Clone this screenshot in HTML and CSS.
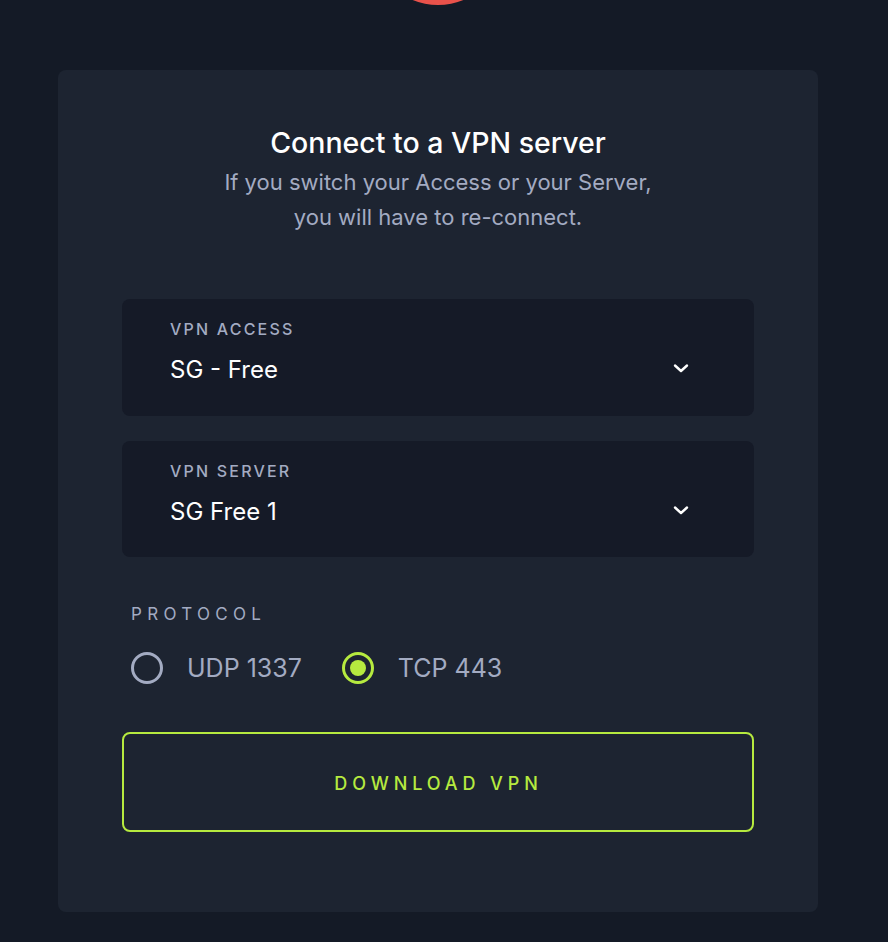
FILE: index.html
```html
<!DOCTYPE html>
<html lang="en">
<head>
<meta charset="utf-8">
<title>Connect to a VPN server</title>
<link rel="stylesheet" href="styles.css">
</head>
<body>
<div class="top">
  <div class="blob"></div>
</div>
<main class="card">
  <h1 class="title">Connect to a VPN server</h1>
  <p class="subtitle">If you switch your Access or your Server,<br>you will have to re-connect.</p>

  <div class="field">
    <div class="field-text">
      <div class="field-label">VPN ACCESS</div>
      <div class="field-value">SG - Free</div>
    </div>
    <svg class="chev" width="18" height="12" viewBox="0 0 18 12"><path d="M3 3.5 L9 9 L15 3.5" fill="none" stroke="#ffffff" stroke-width="2.4" stroke-linecap="round" stroke-linejoin="round"/></svg>
  </div>

  <div class="field">
    <div class="field-text">
      <div class="field-label">VPN SERVER</div>
      <div class="field-value">SG Free 1</div>
    </div>
    <svg class="chev" width="18" height="12" viewBox="0 0 18 12"><path d="M3 3.5 L9 9 L15 3.5" fill="none" stroke="#ffffff" stroke-width="2.4" stroke-linecap="round" stroke-linejoin="round"/></svg>
  </div>

  <div class="protocol">
    <div class="protocol-label">PROTOCOL</div>
    <div class="radios">
      <label class="radio">
        <span class="ring"></span>
        <span class="radio-text">UDP 1337</span>
      </label>
      <label class="radio checked">
        <span class="ring"><span class="dot"></span></span>
        <span class="radio-text">TCP 443</span>
      </label>
    </div>
  </div>

  <button class="download">DOWNLOAD VPN</button>
</main>
</body>
</html>
```
FILE: styles.css
```css
* { box-sizing: border-box; }
html, body { margin: 0; padding: 0; }
body {
  background: #141a26;
  font-family: Inter, "Noto Sans", "Liberation Sans", sans-serif;
  color: #ffffff;
  height: 942px;
  overflow: hidden;
}
.top {
  height: 70px;
  display: flex;
  justify-content: flex-start;
  overflow: hidden;
}
.blob {
  width: 134px;
  height: 134px;
  border-radius: 50%;
  background: #e9524b;
  margin-top: -129px;
  margin-left: 371px;
  flex: none;
}
.card {
  margin-left: 58px;
  width: 760px;
  height: 842px;
  background: #1d2431;
  border-radius: 8px;
  padding: 55px 64px 80px;
  display: flex;
  flex-direction: column;
}
.title {
  margin: 0;
  text-align: center;
  font-size: 28.5px;
  font-weight: 500;
  line-height: 36px;
  color: #ffffff;
}
.subtitle {
  margin: 4px 0 0;
  text-align: center;
  font-size: 22px;
  line-height: 35px;
  color: #a3abc2;
  font-weight: 400;
}
.field {
  background: #151a27;
  border-radius: 8px;
  height: 117px;
  padding: 20px 64px 0 48px;
  display: flex;
  align-items: flex-start;
  justify-content: space-between;
  margin-top: 25px;
}
.subtitle + .field { margin-top: 64px; }
.field-label {
  font-size: 16px;
  line-height: 20px;
  letter-spacing: 2.2px;
  color: #a3abc2;
  font-weight: 500;
}
.field-value {
  margin-top: 16px;
  font-size: 24px;
  line-height: 30px;
  color: #ffffff;
}
.chev { margin-top: 43px; }
.protocol {
  padding-left: 9px;
  margin-top: 45px;
}
.protocol-label {
  font-size: 17px;
  line-height: 24px;
  letter-spacing: 5.3px;
  color: #a3abc2;
  font-weight: 400;
}
.radios {
  display: flex;
  gap: 40px;
  margin-top: 26px;
}
.radio {
  display: flex;
  align-items: center;
  gap: 24px;
}
.ring {
  width: 32px;
  height: 32px;
  border-radius: 50%;
  border: 3px solid #a3abc2;
  display: flex;
  align-items: center;
  justify-content: center;
  flex: none;
}
.radio.checked .ring { border-color: #b6ea3f; }
.dot {
  width: 16px;
  height: 16px;
  border-radius: 50%;
  background: #b6ea3f;
}
.radio-text {
  font-size: 25px;
  line-height: 32px;
  color: #a3abc2;
}
.download {
  margin-top: 48px;
  height: 100px;
  width: 100%;
  background: transparent;
  border: 2px solid #b6ea3f;
  border-radius: 8px;
  color: #b6ea3f;
  font-family: Inter, "Noto Sans", "Liberation Sans", sans-serif;
  font-size: 18px;
  font-weight: 500;
  letter-spacing: 4.9px;
  padding: 2px 0 0 1px;
}
```
